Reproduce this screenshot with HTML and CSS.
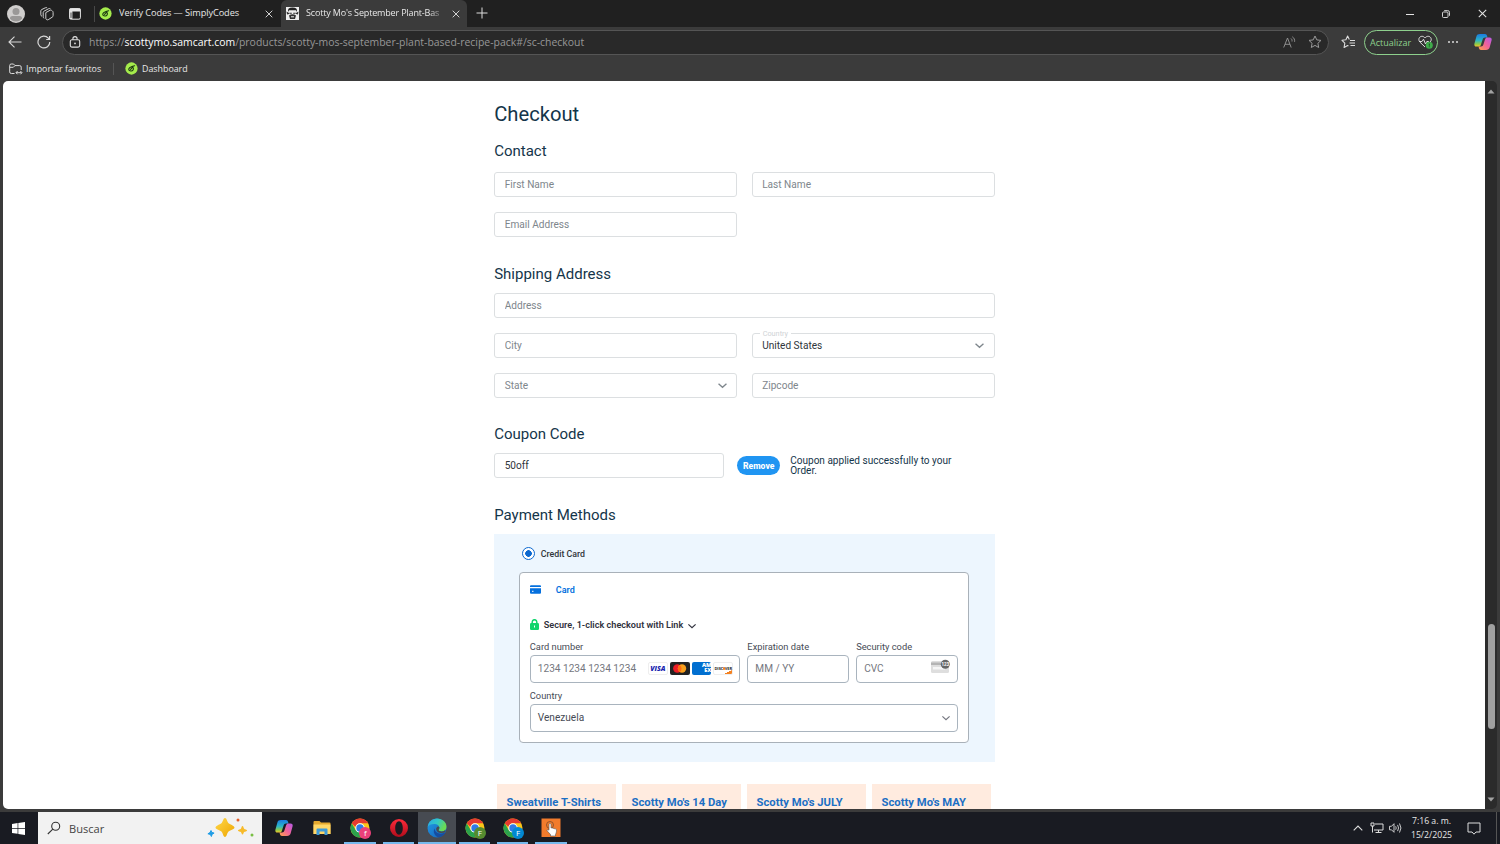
FILE: index.html
```
<!DOCTYPE html>
<html lang="es">
<head>
  <meta charset="UTF-8">
  <title>Scotty Mo's September Plant-Based Recipe Pack</title>
  <link rel="stylesheet" href="styles.css">
</head>
<body>
  <!-- shared icons -->
  <svg class="defs" width="0" height="0">
    <defs>
      <linearGradient id="copA" x1="0" y1="0" x2="0" y2="1"><stop offset="0" stop-color="#1b7be0"/><stop offset=".5" stop-color="#2bb5c8"/><stop offset=".8" stop-color="#8fca45"/><stop offset="1" stop-color="#f5c52c"/></linearGradient>
      <linearGradient id="copB" x1="1" y1="0" x2="0" y2="1"><stop offset="0" stop-color="#b45ae8"/><stop offset=".5" stop-color="#f0619a"/><stop offset="1" stop-color="#ffa44a"/></linearGradient>
      <linearGradient id="edgeA" x1="0" y1="0" x2="1" y2=".4"><stop offset="0" stop-color="#2aa8e8"/><stop offset=".55" stop-color="#33c8c4"/><stop offset="1" stop-color="#6bdc52"/></linearGradient>
      <linearGradient id="edgeB" x1="0" y1="0" x2="1" y2="1"><stop offset="0" stop-color="#1f9be6"/><stop offset="1" stop-color="#1760b8"/></linearGradient>
      <linearGradient id="opera" x1="0" y1="0" x2="0" y2="1"><stop offset="0" stop-color="#ff2b3a"/><stop offset="1" stop-color="#b00d1c"/></linearGradient>
      <linearGradient id="spark" x1="0" y1="0" x2="1" y2="1"><stop offset="0" stop-color="#ffd84a"/><stop offset="1" stop-color="#eea500"/></linearGradient>
    </defs>
    <symbol id="simply" viewBox="0 0 14 14">
      <circle cx="7" cy="7" r="6.600" fill="#a5ec4c"/>
      <path d="M8.900 6.300c.6 1.700-.5 3.300-2.200 3.400-1.800.1-2.900-1-2.600-2.300C4.400 6 6 5.300 7.500 4.800L10.300 4M6 8l2.600-2.700" fill="none" stroke="#1d3a12" stroke-width="1.200" stroke-linecap="round"/>
    </symbol>
    <symbol id="copilot" viewBox="0 0 18 18">
      <path d="M6 1h5c1.200 0 1.700.8 2 1.700l.5 1.800H11c-1.500 0-2 .8-2.400 2L7 11.500C6.500 13 6 13.600 4.500 13.600H2.500C.7 13.600 0 12.300.4 10.700l2-7.300C2.900 1.800 4 1 6 1z" fill="url(#copA)"/>
      <path d="M12 17H7c-1.200 0-1.700-.8-2-1.700l-.5-1.800H7c1.500 0 2-.8 2.400-2L11 6.500c.5-1.500 1-2.100 2.500-2.100h2c1.800 0 2.500 1.300 2.100 2.900l-2 7.300C15.100 16.200 14 17 12 17z" fill="url(#copB)"/>
    </symbol>
    <symbol id="chrome" viewBox="0 0 20 20">
      <circle cx="10" cy="10" r="9.500" fill="#fbc618"/>
      <path d="M1.770 5.250A9.500 9.500 0 0 0 10 19.500l4-7L10 10 5.900 12.400z" fill="#2ba24c"/>
      <path d="M1.770 5.250A9.500 9.500 0 0 1 18.230 5.250H10A4.750 4.750 0 0 0 5.500 9z" fill="#e53a30"/>
      <circle cx="10" cy="10" r="4.700" fill="#fff"/><circle cx="10" cy="10" r="3.700" fill="#2f7be6"/>
    </symbol>
    <symbol id="chev" viewBox="0 0 10 10"><path d="M1.400 3.400 5 6.600l3.600-3.200" fill="none" stroke="currentColor" stroke-width="1.200"/></symbol>
    <symbol id="close" viewBox="0 0 8 8"><path d="m.7.7 6.600 6.600M7.300.7.700 7.300" stroke="#e4e4e4" stroke-width=".9"/></symbol>
  </svg>

  <div class="tabbar">
    <svg class="avatar" width="18" height="18" viewBox="0 0 18 18"><circle cx="9" cy="9" r="9" fill="#d0cecd"/><circle cx="9" cy="6.500" r="3.500" fill="#9a9897"/><path d="M3 13.200c0-1.500 1-2.200 2.500-2.200h7c1.500 0 2.500.7 2.500 2.200-1.300 2.300-3.500 3.300-6 3.300s-4.700-1-6-3.300z" fill="#9a9897"/></svg>
    <svg class="workspaces" width="14" height="14" viewBox="0 0 14 14" fill="none" stroke="#cfcfcf" stroke-width="1"><path d="M5.800 5.600 10 3.300c.8-.4 1.600 0 2.200.5.600.5.900 1 .9 1.700v3.200c0 .7-.3 1.200-.9 1.500l-4 2.500c-.9.500-2.400-.2-2.400-1.400z"/><path d="M4.200 11.300c-.8-.3-1-.8-1-1.500V5.500c0-.6.300-1 .8-1.300L8.700 1.700c.6-.3 1.300-.2 1.800.2M2 9.300c-.8-.3-1.200-.8-1.200-1.500V4c0-.7.300-1.100.8-1.400L5.300.8c.7-.3 1.200-.3 1.800 0"/></svg>
    <svg class="tabmenu" width="12" height="12" viewBox="0 0 12 12"><rect x=".6" y=".6" width="10.800" height="10.600" rx="1.500" fill="none" stroke="#e6e6e6"/><path d="M.6.6h10.800v2.800H.6zM.6 3h2.800v8H.6z" fill="#e6e6e6"/><path d="M2 4.500v5.400" stroke="#202020" stroke-width=".8"/></svg>
    <span class="tab-sep"></span>
    <div class="tab">
      <svg width="13" height="13"><use href="#simply"/></svg>
      <span class="tab-title">Verify Codes — SimplyCodes</span>
      <svg class="tab-close" width="8" height="8"><use href="#close"/></svg>
    </div>
    <div class="tab active">
      <svg width="13" height="13" viewBox="0 0 13 13"><rect width="13" height="13" fill="#eee"/><path d="M2 5C1.500 2 3 .6 6.500.6S11.500 2 11 5l-1-1.700H3z" fill="#222"/><path d="M.5 4.500 3 6v1l-2 .5zM12.500 4.500 10 6v1l2 .5z" fill="#333"/><path d="M3.300 5.800h2.500v1H3.300zM7.200 5.800h2.500v1H7.200zM3 8.400c2-1.500 5-1.500 7 0L9 12H4z" fill="#333"/><path d="M5 9.300h3v1H5z" fill="#eee"/></svg>
      <span class="tab-title">Scotty Mo's September Plant-Bas</span>
      <svg class="tab-close" width="8" height="8"><use href="#close"/></svg>
    </div>
    <svg class="newtab" width="12" height="12" viewBox="0 0 12 12"><path d="M6 .5v11M.5 6h11" stroke="#ddd"/></svg>
    <div class="win-buttons">
      <svg width="8" height="8" viewBox="0 0 8 8"><path d="M0 4.500h8" stroke="#e4e4e4"/></svg>
      <svg width="8" height="8" viewBox="0 0 8 8" fill="none" stroke="#e4e4e4" stroke-width=".9"><rect x=".5" y="2" width="5.500" height="5.500" rx="1"/><path d="M2.200.6h3.500a1.800 1.800 0 0 1 1.800 1.800v3.400"/></svg>
      <svg width="9" height="9"><use href="#close"/></svg>
    </div>
  </div>

  <div class="toolbar">
    <svg class="back" width="14" height="12" viewBox="0 0 14 12"><path d="M6.500.7 1 6l5.500 5.300M1 6h12.500" fill="none" stroke="#d8d8d8" stroke-width="1.100"/></svg>
    <svg class="reload" width="14" height="14" viewBox="0 0 14 14" fill="none" stroke="#d8d8d8" stroke-width="1.200"><path d="M12.800 7A5.900 5.900 0 1 1 11.300 3.100L12.500 4.400"/><path d="M12.600 1v3.500H9.200"/></svg>
    <div class="address">
      <svg width="12" height="12" viewBox="0 0 12 12"><rect x="1.300" y="3.800" width="9.400" height="7.300" rx="1.600" fill="none" stroke="#e0e0e0" stroke-width="1.100"/><path d="M3.900 3.800V2.700a2.100 2.100 0 0 1 4.200 0v1.100" fill="none" stroke="#e0e0e0" stroke-width="1.100"/><circle cx="6" cy="7.400" r=".9" fill="#e0e0e0"/></svg>
      <span class="url">https://<b>scottymo.samcart.com</b>/products/scotty-mos-september-plant-based-recipe-pack#/sc-checkout</span>
      <svg class="read" width="13" height="13" viewBox="0 0 13 13" fill="none" stroke="#999" stroke-width=".9"><path d="M.7 11.500 4.500 2 8.200 11.500M2 8.300h5M8 2.500c.9.700 1.200 1.700 1 3M9.300.8c1.800 1.100 2.600 2.900 2.300 5"/></svg>
      <svg class="star" width="14" height="14" viewBox="0 0 14 14"><path d="m7 1 1.800 3.900 4.200.5L9.900 8.300l.8 4.200L7 10.400l-3.700 2.100.8-4.200L1 5.400l4.200-.5z" fill="none" stroke="#999" stroke-linejoin="round"/></svg>
    </div>
    <svg class="favs" width="15" height="14" viewBox="0 0 15 14" fill="none" stroke="#ddd" stroke-width="1.100"><path d="M8.300 4.500 6.600 1 4.900 4.700 1 5.300l2.800 2.800-.7 4.400 3.500-2 .8.500M9 5.500h5M8.500 8h5.500M9.500 10.500H14" stroke-linejoin="round"/></svg>
    <button class="update">Actualizar
      <svg width="15" height="14" viewBox="0 0 15 14"><path d="M7 12 2 7.200C-.2 4.800 1 1.500 3.800 1.300 5.200 1.200 6.300 2 7 3c.7-1 1.900-1.800 3.300-1.700 2.700.2 3.900 3.200 2 5.600M1 6.500h3l1.500-2.300L7.500 9l1.300-2.500h2" fill="none" stroke="#dcdcdc" stroke-width="1"/><circle cx="11.300" cy="10.300" r="3.500" fill="#3fab4b"/><path d="M11.300 8.500v2.200M11.300 11.400v.8" stroke="#184d1c"/></svg>
    </button>
    <svg class="more" width="12" height="4" viewBox="0 0 12 4" fill="#ddd"><circle cx="2" cy="2" r="1"/><circle cx="6" cy="2" r="1"/><circle cx="10" cy="2" r="1"/></svg>
    <svg class="cop" width="18" height="18"><use href="#copilot"/></svg>
  </div>

  <div class="favbar">
    <svg width="14" height="12" viewBox="0 0 14 12" fill="none" stroke="#ddd" stroke-width="1"><path d="M5.500 10.500H2.300A1.600 1.600 0 0 1 .7 8.900V2.500A1.500 1.500 0 0 1 2.200 1h2.300L6 2.600h4.700a1.500 1.500 0 0 1 1.500 1.500V7M.7 4.300h3.600L6 2.600M7 9.700h5.500M8.600 8 7 9.700l1.600 1.600M11.400 8l1.600 1.700-1.600 1.600"/></svg>
    <span class="fav-import">Importar favoritos</span>
    <span class="fav-sep"></span>
    <svg width="13" height="13"><use href="#simply"/></svg>
    <span class="fav-dash">Dashboard</span>
  </div>

  <div class="viewport">
    <main class="page">
      <div class="checkout">
        <h1>Checkout</h1>

        <section class="contact">
          <h2>Contact</h2>
          <div class="fields">
            <input type="text" placeholder="First Name">
            <input type="text" placeholder="Last Name">
            <input type="text" placeholder="Email Address">
          </div>
        </section>

        <section class="shipping">
          <h2>Shipping Address</h2>
          <div class="fields">
            <input class="full" type="text" placeholder="Address">
            <input type="text" placeholder="City">
            <div class="select filled"><label>Country</label>United States<svg width="11" height="11"><use href="#chev"/></svg></div>
            <div class="select">State<svg width="11" height="11"><use href="#chev"/></svg></div>
            <input type="text" placeholder="Zipcode">
          </div>
        </section>

        <section class="coupon">
          <h2>Coupon Code</h2>
          <div class="coupon-row">
            <input type="text" value="50off">
            <button class="remove">Remove</button>
            <p>Coupon applied successfully to your Order.</p>
          </div>
        </section>

        <section class="payment">
          <h2>Payment Methods</h2>
          <div class="pay-box">
            <div class="pay-option"><span class="radio"></span>Credit Card</div>
            <div class="card-box">
              <div class="card-tab">
                <svg width="11" height="9" viewBox="0 0 11 9"><path d="M0 2V1.200Q0 .3 1 .3h9q1 0 1 .9V2zM0 3.300h11v4.400q0 1-1 1H1q-1 0-1-1z" fill="#0570de"/><path d="M2 6.300h1.500" stroke="#fff"/></svg>
                Card
              </div>
              <div class="link-row">
                <svg width="9" height="11" viewBox="0 0 9 11"><rect y="4" width="9" height="7" rx="1.300" fill="#10d56c"/><path d="M2.200 4.500V3a2.300 2.300 0 0 1 4.600 0v1.500" fill="none" stroke="#10d56c" stroke-width="1.500"/><path d="M4.500 6.500v2" stroke="#fff"/></svg>
                Secure, 1-click checkout with Link
                <svg class="link-chev" width="10" height="10"><use href="#chev"/></svg>
              </div>
              <div class="card-fields">
                <div>
                  <label>Card number</label>
                  <div class="card-input"><span>1234 1234 1234 1234</span>
                    <div class="brands">
                      <span class="brand visa">VISA</span>
                      <span class="brand mc"><svg width="19" height="13" viewBox="0 0 19 13"><circle cx="7.300" cy="6.500" r="4.200" fill="#eb1c26"/><circle cx="12" cy="6.500" r="4.200" fill="#f99f1b"/><path d="M9.650 3a4.200 4.200 0 0 1 0 7 4.200 4.200 0 0 1 0-7z" fill="#ff6a13"/></svg></span>
                      <span class="brand amex"><i>AM</i><i>EX</i></span>
                      <span class="brand disc">DISC<b></b>VER</span>
                    </div>
                  </div>
                </div>
                <div>
                  <label>Expiration date</label>
                  <div class="card-input"><span>MM / YY</span></div>
                </div>
                <div>
                  <label>Security code</label>
                  <div class="card-input"><span>CVC</span>
                    <svg class="cvc" width="20" height="15" viewBox="0 0 20 15"><rect x="0" y="2" width="18" height="12" rx="1.500" fill="#dedede"/><rect y="3.500" width="18" height="2.500" fill="#b4b4b4"/><rect x="2" y="8" width="12" height="2.500" fill="#f6f6f6"/><circle cx="14.300" cy="5.300" r="4.500" fill="#666"/><text x="14.300" y="7.100" text-anchor="middle" font-size="4.500" font-weight="700" fill="#fff">123</text></svg>
                  </div>
                </div>
                <div class="full">
                  <label>Country</label>
                  <div class="card-input country"><span>Venezuela</span><svg width="10" height="10"><use href="#chev"/></svg></div>
                </div>
              </div>
            </div>
          </div>
        </section>

        <div class="products">
          <div class="product">Sweatville T-Shirts</div>
          <div class="product">Scotty Mo's 14 Day</div>
          <div class="product">Scotty Mo's JULY</div>
          <div class="product">Scotty Mo's MAY</div>
        </div>
      </div>
    </main>
    <div class="scrollbar">
      <svg width="8" height="5" viewBox="0 0 8 5"><path d="M.5 4.500 4 .5l3.500 4z" fill="#a3a3a3"/></svg>
      <span class="thumb"></span>
      <svg width="8" height="5" viewBox="0 0 8 5"><path d="M.5.500 4 4.500 7.500.500z" fill="#a3a3a3"/></svg>
    </div>
  </div>

  <div class="taskbar">
    <div class="start"><svg width="13" height="13" viewBox="0 0 13 13" fill="#fff"><path d="M0 1.900 5.600 1.100v5H0zM6.300 1 13 0v6.100H6.300zM0 6.800h5.600v5L0 11zM6.300 6.800H13V13l-6.700-1z"/></svg></div>
    <div class="search">
      <svg width="14" height="14" viewBox="0 0 14 14" fill="none" stroke="#333" stroke-width="1.100"><circle cx="8.700" cy="5.200" r="4"/><path d="M5.800 8.200.8 13"/></svg>
      <span>Buscar</span>
      <svg class="sparkles" width="48" height="20" viewBox="0 0 48 20"><path d="M19 0c1.800 0 2 3.500 3.300 4.900S28.500 7.500 28.500 9.500s-4.800 2.800-6.200 4.300S20.800 19 19 19s-2-3.700-3.300-5.200-6.200-2.300-6.200-4.300 4.900-3.200 6.200-4.600S17.200 0 19 0z" fill="url(#spark)"/><path d="M36.500 8c.9 0 1 2 1.600 2.700s3 .9 3 1.700-2.300 1.100-3 1.700-.7 2.500-1.600 2.500-.9-1.900-1.600-2.500-3-.9-3-1.700 2.400-1 3-1.700S35.600 8 36.500 8z" fill="#f7bb2a"/><path d="m5 12.500.8 1.900 2.300.7-2 1.100-.7 2.300-1.100-2.100-2.400-.6 2.100-1.200z" fill="#1d9ce6" stroke="#1d9ce6"/><circle cx="32" cy="2" r="1.500" fill="#e5602a"/><circle cx="46" cy="17" r="1.500" fill="#79bf45"/></svg>
    </div>
    <div class="apps">
      <div class="app"><svg width="18" height="18"><use href="#copilot"/></svg></div>
      <div class="app"><svg width="18" height="16" viewBox="0 0 18 16"><path d="M.5 2q0-1 1-1h5l1.500 1.500h8.500q1 0 1 1V14H.5z" fill="#e5a92f"/><path d="M.5 4.500h17V14H.5z" fill="#ffd768"/><path d="M3.500 15V9.500q0-1 1-1h9q1 0 1 1V15h-3v-3.500h-5V15z" fill="#3f9bd8"/></svg></div>
      <div class="app open"><svg width="20" height="20"><use href="#chrome"/></svg><span class="badge pink">f</span></div>
      <div class="app open"><svg width="18" height="18" viewBox="0 0 18 18"><path fill-rule="evenodd" d="M9 0a9 9 0 1 1 0 18A9 9 0 0 1 9 0zm0 2.300C6.800 2.300 5.200 5.200 5.200 9s1.600 6.700 3.800 6.700 3.800-2.900 3.800-6.700S11.200 2.300 9 2.300z" fill="url(#opera)"/></svg></div>
      <div class="app open current"><svg width="20" height="20" viewBox="0 0 20 20"><circle cx="10" cy="10" r="9.500" fill="url(#edgeB)"/><path d="M.6 9C1.300 4 5 .5 10 .5c5.500 0 9.500 3.700 9.500 8.300 0 2.800-2 4.700-4.700 4.700-2 0-3.300-.8-3.300-1.500 0-.6.900-.9.900-2.300C12.400 7.500 10 6 7.200 6 4 6 1.500 7.200.6 9z" fill="url(#edgeA)"/><path d="M7.500 10.500c.5 4 4.500 6.500 9.500 4.500l1.300-.3A9.500 9.500 0 0 1 12 19.300c-4-.6-6.500-5.300-4.500-8.800z" fill="#164d9f"/><path d="M12.400 9.700c0 1.400-.9 1.700-.9 2.300 0 .7 1.300 1.500 3.300 1.500 1.500 0 2.700-.5 3.500-1.400L18.500 14c-4 2.500-9.500.5-9.300-3.300 0-1 1-2 1.800-2.300.9 0 1.400.6 1.400 1.300z" fill="#474b52"/></svg></div>
      <div class="app open"><svg width="20" height="20"><use href="#chrome"/></svg><span class="badge green">F</span></div>
      <div class="app open"><svg width="20" height="20"><use href="#chrome"/></svg><span class="badge blue">F</span></div>
      <div class="app open"><svg width="20" height="20" viewBox="0 0 20 20"><rect x=".5" y=".5" width="19" height="18.500" fill="#f17b2c"/><circle cx="9" cy="7" r="3.500" fill="none" stroke="#7a4a2a" stroke-width=".8"/><path d="M8 6.500c0-1.300 2-1.300 2 0V10c1-.4 1.700 0 2 .4.800-.3 1.500 0 1.800.5.900-.2 1.700.2 1.700 1.200 0 2-.4 3.200-1 4.200V18H9.500v-1.500L6.300 13c-.8-1 .4-2 1.700-.8z" fill="#fff" stroke="#555" stroke-width=".6"/></svg></div>
    </div>
    <div class="tray">
      <svg width="10" height="6" viewBox="0 0 10 6"><path d="M.7 5.300 5 1l4.300 4.300" fill="none" stroke="#ddd" stroke-width="1.100"/></svg>
      <svg class="net" width="14" height="12" viewBox="0 0 14 12" fill="none" stroke="#ddd"><path d="M5 2h8v6H4M8.500 8v2.500M5.500 10.500h6M1 1h3v3H1zM2.500 4v6.500"/></svg>
      <svg class="vol" width="13" height="12" viewBox="0 0 13 12" fill="none" stroke="#ddd" stroke-width=".9"><path d="M.5 4.300h2L5 1.700v8.600L2.500 7.800h-2zM6.700 4.300q1 1.700 0 3.400M8.600 2.900q1.900 3.100 0 6.200M10.500 1.500q2.900 4.500 0 9"/></svg>
      <div class="clock"><span>7:16 a. m.</span><span class="date">15/2/2025</span></div>
      <svg class="notif" width="14" height="13" viewBox="0 0 14 13"><path d="M1 1h12v9H9l-2 2.200L5 10H1z" fill="none" stroke="#ddd"/></svg>
      <span class="desk"></span>
    </div>
  </div>
</body>
</html>
```
FILE: styles.css
```
* {
  box-sizing: border-box;
}

body {
  margin: 0;
  width: 1500px;
  height: 844px;
  overflow: hidden;
  background: #3b3b3b;
  font-family: Roboto, sans-serif;
  display: flex;
  flex-direction: column;
}

svg {
  display: block;
  flex: none;
}

.defs {
  position: absolute;
}

/* browser chrome */
.tabbar, .toolbar, .favbar, .taskbar {
  font-family: "Open Sans", sans-serif;
  display: flex;
  align-items: center;
  flex: none;
  white-space: nowrap;
  color: #e8e8e8;
  font-size: 9.2px;
}

.tabbar {
  height: 27px;
  background: #202020;
  padding-left: 7px;
}

.workspaces {
  margin-left: 15px;
}

.tabmenu {
  margin-left: 15px;
}

.tab-sep {
  width: 1px;
  height: 16px;
  background: #484848;
  margin-left: 13px;
}

.tab {
  display: flex;
  align-items: center;
  width: 186px;
  height: 27px;
  padding-left: 4px;
}

.tab-title {
  width: 140px;
  margin: -2px 0 0 7px;
  letter-spacing: -0.08px;
  overflow: hidden;
}

.tab-close {
  margin-left: 6px;
}

.tab.active {
  background: #3b3b3b;
  border-radius: 6px 6px 0 0;
  padding-left: 5px;
}

.active .tab-title {
  font-size: 9px;
  letter-spacing: -0.16px;
  -webkit-mask-image: linear-gradient(to right, #000 88%, transparent);
}

.newtab {
  margin: -2px 0 0 9px;
}

.win-buttons {
  margin-left: auto;
  display: flex;
  align-items: center;
  gap: 28px;
  padding-right: 13px;
}

.toolbar {
  height: 30px;
  padding-left: 8px;
}

.reload {
  margin-left: 15px;
}

.address {
  display: flex;
  align-items: center;
  width: 1267px;
  height: 25px;
  margin-left: 11px;
  padding-left: 6px;
  background: #292929;
  border: 1px solid #555;
  border-radius: 13px;
}

.url {
  margin-left: 8px;
  font-size: 10.45px;
  color: #979797;
}

.url b {
  font-weight: 400;
  color: #fff;
}

.read {
  margin-left: auto;
}

.star {
  margin: 0 6px 0 12px;
}

.favs {
  margin-left: 12px;
}

.update {
  display: flex;
  align-items: center;
  justify-content: space-between;
  width: 74px;
  height: 25px;
  margin-left: 8px;
  padding: 0 4px 0 5px;
  border: 1px solid #8ed08d;
  border-radius: 13px;
  background: #333;
  color: #8ed08d;
  font: 9px "Open Sans", sans-serif;
}

.more {
  margin-left: 9px;
}

.cop {
  margin-left: 15px;
}

.favbar {
  height: 24px;
  padding: 0 0 1px 9px;
  font-size: 8.85px;
}

.fav-import {
  width: 75px;
  margin-left: 3px;
}

.fav-sep {
  width: 1px;
  height: 12px;
  margin: 0 11px 0 12px;
  background: #555;
}

.fav-dash {
  margin-left: 4px;
}

.viewport {
  display: flex;
  height: 728px;
  margin: 0 3px;
  background: #2b2b2b;
  border-radius: 5px;
  overflow: hidden;
  flex: none;
}

.page {
  width: 1482px;
  background: #fff;
  overflow: hidden;
}

.scrollbar {
  width: 12px;
  display: flex;
  flex-direction: column;
  align-items: center;
  padding: 8px 0 7px;
}

.thumb {
  width: 7px;
  height: 105px;
  margin: 530px 0 auto;
  background: #a0a0a0;
  border-radius: 4px;
}

/* checkout form */
.checkout {
  width: 500.4px;
  margin-left: 491.2px;
  padding-top: 18px;
  color: #14354a;
}

h1 {
  margin: 0 0 12px;
  font-size: 20.2px;
  line-height: 30px;
  font-weight: 400;
}

h2 {
  margin: 0 0 9px;
  font-size: 15px;
  line-height: 20px;
  font-weight: 400;
}

.contact {
  height: 123px;
}

.contact h2 {
  margin-bottom: 11px;
}

.shipping {
  height: 160px;
}

.coupon {
  height: 80.5px;
}

.fields {
  display: grid;
  grid-template-columns: 1fr 1fr;
  gap: 14.9px 14.6px;
}

.full {
  grid-column: 1 / -1;
}

input, .select {
  position: relative;
  display: flex;
  align-items: center;
  width: 100%;
  height: 25.2px;
  padding: 0 9.5px;
  background: #fff;
  color: #7e868c;
  border: 1px solid #dcdfe1;
  border-radius: 3px;
  font: 10.1px Roboto, sans-serif;
}

input::placeholder {
  color: #7e868c;
}

.select svg {
  margin-left: auto;
  margin-right: -1px;
}

.select.filled {
  color: #30353a;
}

.select.filled svg {
  color: #7e868c;
}

.select label {
  position: absolute;
  left: 7px;
  top: -5px;
  padding: 0 3px;
  background: #fff;
  color: #cfd3d6;
  font-size: 7.3px;
  line-height: 10px;
}

.coupon-row {
  display: flex;
  align-items: center;
}

.coupon-row input {
  width: 230px;
  color: #30353a;
}

.remove {
  width: 43px;
  height: 19px;
  margin-left: 13px;
  padding: 0;
  border: none;
  border-radius: 10px;
  background: #2095f2;
  color: #fff;
  font: 800 8.6px Roboto, sans-serif;
}

.coupon-row p {
  width: 175px;
  margin: 0 0 0 10px;
  font-size: 10.05px;
  line-height: 10px;
}

.pay-box {
  height: 228px;
  padding: 13px 26px 0 24.6px;
  background: #edf6fe;
}

.pay-option {
  display: flex;
  align-items: center;
  height: 14px;
  padding-left: 3px;
  font-size: 8.8px;
  font-weight: 500;
  color: #30353a;
}

.radio {
  width: 13px;
  height: 13px;
  margin-right: 6px;
  border: 1px solid #0b68d0;
  border-radius: 50%;
  background: radial-gradient(circle, #0b68d0 3px, #fff 3.6px);
}

.card-box {
  height: 171px;
  margin-top: 11px;
  padding: 11px 10px 0;
  background: #fff;
  border: 1px solid #a9b1b9;
  border-radius: 4px;
}

.card-tab, .link-row {
  display: flex;
  align-items: center;
  height: 12px;
  font-size: 9px;
  font-weight: 600;
  color: #0570de;
}

.card-tab svg {
  margin-right: 15px;
}

.link-row {
  margin-top: 23px;
  font-size: 9.15px;
  color: #30313d;
}

.link-row svg {
  margin-right: 5px;
}

.link-row .link-chev {
  margin: 2px 0 0 4px;
}

.card-fields {
  display: grid;
  grid-template-columns: 210.4px 101.6px 101.6px;
  column-gap: 7.2px;
  row-gap: 6px;
  margin-top: 9px;
}

.card-fields label {
  display: block;
  height: 15px;
  font-size: 9.3px;
  line-height: 13px;
  color: #464b55;
}

.card-input {
  display: flex;
  align-items: center;
  justify-content: space-between;
  height: 28px;
  padding: 0 6px 1px 7px;
  border: 1px solid #a9b4be;
  border-radius: 4px;
  color: #757780;
  font-size: 10.1px;
}

.country {
  color: #464b55;
}

.country svg {
  margin-top: 2px;
  color: #757780;
}

.brands {
  display: flex;
  gap: 2px;
}

.brand {
  display: flex;
  align-items: center;
  justify-content: center;
  width: 19.8px;
  height: 13px;
  border-radius: 2px;
  white-space: nowrap;
}

.visa {
  border: 1px solid #eee;
  color: #1a1fb0;
  font: italic 800 7px "Open Sans", sans-serif;
}

.mc {
  background: #222;
}

.amex {
  flex-direction: column;
  align-items: flex-end;
  background: #016fd0;
  color: #fff;
  font: 800 5.6px/5.2px "Open Sans", sans-serif;
}

.amex i {
  font-style: normal;
}

.disc {
  border: 1px solid #eee;
  background: linear-gradient(155deg, #fff 80%, #f48120 81%);
  color: #222;
  font: 700 4px "Open Sans", sans-serif;
}

.disc b {
  width: 3px;
  height: 3px;
  border-radius: 50%;
  background: #f48120;
}

.cvc {
  margin-top: -3px;
}

.products {
  display: grid;
  grid-template-columns: repeat(4, 119.5px);
  gap: 5.5px;
  margin: 22px 0 0 2.8px;
}

.product {
  height: 60px;
  padding: 12px 0 0 9.6px;
  background: #ffebdf;
  color: #1c6fc4;
  font-size: 11.25px;
  line-height: 14px;
  font-weight: 700;
}

/* windows taskbar */
.taskbar {
  height: 32px;
  margin-top: auto;
  background: #191b22;
}

.start {
  width: 38px;
  padding-left: 12px;
}

.search {
  display: flex;
  align-items: center;
  width: 224px;
  height: 32px;
  padding: 0 8px 0 9px;
  background: #f2f2f2;
  color: #444;
  font-size: 11.1px;
}

.search span {
  margin-left: 8px;
}

.sparkles {
  margin-left: auto;
}

.apps {
  display: flex;
  align-self: stretch;
  padding-left: 3px;
}

.app {
  position: relative;
  display: flex;
  align-items: center;
  justify-content: center;
  width: 38.2px;
}

.app.current {
  background: #474b52;
}

.open::after {
  content: "";
  position: absolute;
  left: 3px;
  right: 4px;
  bottom: 0;
  height: 2px;
  background: #76b9ed;
}

.current::after {
  left: 0;
  right: 0;
}

.badge {
  position: absolute;
  left: 18px;
  top: 15px;
  width: 12px;
  height: 12px;
  border-radius: 50%;
  color: #fff;
  font-size: 8px;
  line-height: 12px;
  text-align: center;
}

.pink {
  background: #ec407a;
}

.green {
  background: #558b2f;
}

.blue {
  background: #0288d1;
}

.tray {
  display: flex;
  align-items: center;
  align-self: stretch;
  margin-left: auto;
}

.net {
  margin-left: 7px;
}

.vol {
  margin-left: 5px;
}

.clock {
  display: flex;
  flex-direction: column;
  align-items: center;
  width: 41px;
  margin-left: 9px;
  font-size: 8.7px;
  line-height: 14px;
}

.notif {
  margin-left: 15px;
}

.desk {
  width: 1px;
  height: 32px;
  margin: 0 3px 0 15px;
  background: #555;
}
```
